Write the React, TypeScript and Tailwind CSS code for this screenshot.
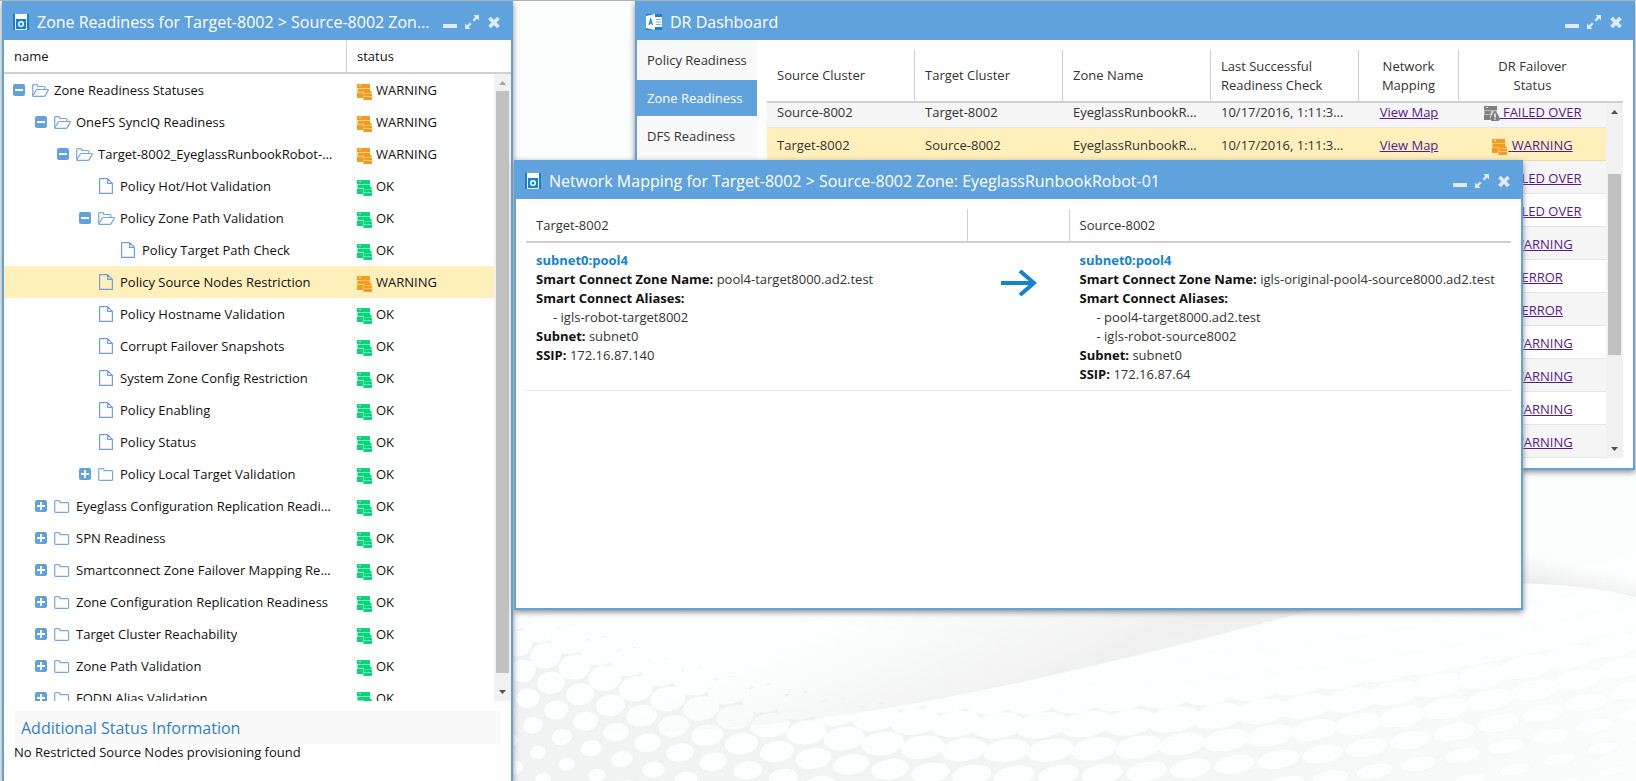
import type { ReactNode } from "react";

type Status = "OK" | "WARNING" | "ERROR" | "FAILED OVER";
type NodeKind = "open" | "closed" | "leaf";

interface TreeNode {
  name: string;
  depth: number;
  kind: NodeKind;
  status: Status;
  selected?: boolean;
}

const TREE: TreeNode[] = [
  { name: "Zone Readiness Statuses", depth: 0, kind: "open", status: "WARNING" },
  { name: "OneFS SyncIQ Readiness", depth: 1, kind: "open", status: "WARNING" },
  { name: "Target-8002_EyeglassRunbookRobot-01_mirror", depth: 2, kind: "open", status: "WARNING" },
  { name: "Policy Hot/Hot Validation", depth: 3, kind: "leaf", status: "OK" },
  { name: "Policy Zone Path Validation", depth: 3, kind: "open", status: "OK" },
  { name: "Policy Target Path Check", depth: 4, kind: "leaf", status: "OK" },
  { name: "Policy Source Nodes Restriction", depth: 3, kind: "leaf", status: "WARNING", selected: true },
  { name: "Policy Hostname Validation", depth: 3, kind: "leaf", status: "OK" },
  { name: "Corrupt Failover Snapshots", depth: 3, kind: "leaf", status: "OK" },
  { name: "System Zone Config Restriction", depth: 3, kind: "leaf", status: "OK" },
  { name: "Policy Enabling", depth: 3, kind: "leaf", status: "OK" },
  { name: "Policy Status", depth: 3, kind: "leaf", status: "OK" },
  { name: "Policy Local Target Validation", depth: 3, kind: "closed", status: "OK" },
  { name: "Eyeglass Configuration Replication Readiness", depth: 1, kind: "closed", status: "OK" },
  { name: "SPN Readiness", depth: 1, kind: "closed", status: "OK" },
  { name: "Smartconnect Zone Failover Mapping Readiness", depth: 1, kind: "closed", status: "OK" },
  { name: "Zone Configuration Replication Readiness", depth: 1, kind: "closed", status: "OK" },
  { name: "Target Cluster Reachability", depth: 1, kind: "closed", status: "OK" },
  { name: "Zone Path Validation", depth: 1, kind: "closed", status: "OK" },
  { name: "FQDN Alias Validation", depth: 1, kind: "closed", status: "OK" },
];

const INDENT = ["pl-[9px]", "pl-[31px]", "pl-[53px]", "pl-[75px]", "pl-[97px]"];

const ZONES: { source: string; target: string; status: Status; selected?: boolean }[] = [
  { source: "Source-8002", target: "Target-8002", status: "FAILED OVER" },
  { source: "Target-8002", target: "Source-8002", status: "WARNING", selected: true },
  { source: "Source-8002", target: "Target-8002", status: "FAILED OVER" },
  { source: "Source-8002", target: "Target-8002", status: "FAILED OVER" },
  { source: "Target-8002", target: "Source-8002", status: "WARNING" },
  { source: "Target-8002", target: "Source-8002", status: "ERROR" },
  { source: "Target-8002", target: "Source-8002", status: "ERROR" },
  { source: "Target-8002", target: "Source-8002", status: "WARNING" },
  { source: "Target-8002", target: "Source-8002", status: "WARNING" },
  { source: "Target-8002", target: "Source-8002", status: "WARNING" },
  { source: "Target-8002", target: "Source-8002", status: "WARNING" },
];

const STATUS_COLOR: Record<Status, string> = {
  OK: "#0ad47b",
  WARNING: "#f39c1f",
  ERROR: "#e03c31",
  "FAILED OVER": "#808080",
};

function StatusIcon({ status }: { status: Status }) {
  const c = STATUS_COLOR[status];
  return (
    <svg viewBox="0 0 16 16" className="inline-block h-4 w-4 shrink-0 align-middle" aria-hidden="true">
      <path fill={c} fillOpacity=".5" d="M0 4h13v1H0zM0 8h13v1H0zM0 5h1v8H0z" />
      <path fill={c} d="M0 0h13v4H0zM1 5h12v3H1zM0 9h13v1H0zM0 10h6v4H0z" />
      <path fill="#fff" fillOpacity=".8" d="M2 1h2v1H2z" />
      {status === "FAILED OVER" ? (
        <>
          <path fill="#f5f5f5" d="M7 5h8v10H6z" fillOpacity=".7" />
          <path
            fill={c}
            d="M11 5q.9 0 1.300.8l3 5.200q1.500 4-1.600 4H8.300q-3.100 0-1.600-4l3-5.200q.4-.8 1.300-.8Z"
          />
          <path fill="#fff" d="M10.300 7.500h1.400v4h-1.400zM10.300 12.500h1.400v1.300h-1.400z" />
        </>
      ) : (
        <>
          <path fill="#fff" fillOpacity=".6" d="M6 7h9v9H6z" />
          <path fill={c} fillOpacity=".6" d="M6 7h9v9H6z" />
          <path fill={c} d="M7 7h7v2H7zM7 10h8v2H7zM7 13h8v3H7z" />
        </>
      )}
    </svg>
  );
}

function FolderOpenIcon() {
  return (
    <svg viewBox="0 0 17 13" className="h-[13px] w-[17px]" fill="none" stroke="#7aa6e2" strokeWidth="1.2" strokeLinejoin="round">
      <path d="M.7 11.500v-10q0-.9.9-.9h3.200q.9 0 .9.900v1h6.300q.9 0 .9.900v2" />
      <path d="M.8 11.800 4.300 6.100q.3-.6 1-.6h10.300q1.100 0 .6.900l-3 5.200q-.4.700-1.200.7H1.300q-.8 0-.5-.5Z" />
    </svg>
  );
}

function FolderIcon() {
  return (
    <svg viewBox="0 0 17 13" className="h-[13px] w-[17px]" fill="none" stroke="#7aa6e2" strokeWidth="1.2" strokeLinejoin="round">
      <path d="M.7 1.600q0-1 1-1h3.300q1 0 1 1v1h7.600q1 0 1 1v7.800q0 1-1 1H1.700q-1 0-1-1Z" />
    </svg>
  );
}

function FileIcon() {
  return (
    <svg viewBox="0 0 16 16" className="h-4 w-4" fill="none" stroke="#6f9fe0" strokeWidth="1.2" strokeLinejoin="round">
      <path d="M1.600.6h8l4.800 4.800v10H1.600ZM9.600.6v4.800h4.800" />
    </svg>
  );
}

function Expander({ open, label }: { open: boolean; label: string }) {
  return (
    <button aria-label={`${open ? "Collapse" : "Expand"} ${label}`} className="h-3 w-3 shrink-0 rounded-xs bg-[#5fa2dd]">
      <svg viewBox="0 0 12 12" className="h-3 w-3" fill="#fff">
        <path d={open ? "M2 5h8v2H2z" : "M2 5h8v2H2zM5 2h2v8H5z"} />
      </svg>
    </button>
  );
}

function ServerLogo() {
  return (
    <svg viewBox="0 0 16 16" className="h-4 w-4 shrink-0" aria-hidden="true">
      <path fill="#1583d3" d="M0 0h16v16H0z" />
      <path fill="#fff" d="M2 0h12v5H2z" />
      <path fill="none" stroke="#fff" d="M2.500 5v10.500h11V5" />
      <circle cx="8" cy="10" r="2.300" fill="none" stroke="#fff" strokeWidth="1.500" />
    </svg>
  );
}

function DashboardLogo() {
  return (
    <svg viewBox="0 0 16 16" className="h-4 w-4 shrink-0" aria-hidden="true">
      <path fill="#1583d3" d="M0 0h16v16H0z" />
      <path fill="#fff" d="M0 2 9 0v16l-9-2zM9 3h7v10H9z" />
      <path stroke="#1583d3" strokeOpacity=".6" d="M10 5.500h5M10 8h5M10 10.500h5" />
      <path fill="none" stroke="#1583d3" strokeWidth="1.200" d="M3 11 4.700 5.200 6.400 11M3.500 9.200h2.400" />
    </svg>
  );
}

function WindowTools() {
  return (
    <div className="flex shrink-0 items-center gap-2 text-white/80">
      <button aria-label="Minimize">
        <svg viewBox="0 0 14 14" className="h-[14px] w-[14px]" fill="currentColor">
          <rect x="0" y="9" width="14" height="4" rx=".5" />
        </svg>
      </button>
      <button aria-label="Maximize">
        <svg viewBox="0 0 14 14" className="h-[14px] w-[14px]" fill="currentColor">
          <path d="M8.500 0H14v5.500l-1.900-1.900-3 3-1.700-1.700 3-3zM0 14V8.500l1.900 1.900 3-3 1.700 1.700-3 3L5.500 14z" />
        </svg>
      </button>
      <button aria-label="Close">
        <svg viewBox="0 0 14 14" className="h-[14px] w-[14px]" stroke="currentColor" strokeWidth="3.600">
          <path d="M2.500 3l9 9M11.500 3l-9 9" />
        </svg>
      </button>
    </div>
  );
}

function DesktopWindow(props: { title: string; logo: ReactNode; className: string; children: ReactNode }) {
  return (
    <section
      className={`absolute flex flex-col border-2 border-t-0 border-[#5fa2dd] bg-white shadow-[0_2px_6px_#888] ${props.className}`}
    >
      <header className="flex h-[39px] shrink-0 items-center gap-2 bg-[#5fa2dd] pl-[9px] pr-[10px] pt-0.5">
        {props.logo}
        <h2 className="min-w-0 flex-1 truncate text-base leading-6 text-white">{props.title}</h2>
        <WindowTools />
      </header>
      {props.children}
    </section>
  );
}

function ScrollBar({ thumb, dimUp }: { thumb: string; dimUp?: boolean }) {
  return (
    <div className="flex w-[17px] shrink-0 flex-col items-center bg-[#f1f1f1]" aria-hidden="true">
      <svg viewBox="0 0 17 17" className="h-[17px] w-[17px] shrink-0" fill={dimUp ? "#a3a3a3" : "#505050"}>
        <path d="M5 11l3.500-4 3.500 4z" />
      </svg>
      <div className="flex min-h-0 w-[13px] flex-1 flex-col">
        <div className={`bg-[#c1c1c1] ${thumb}`} />
      </div>
      <svg viewBox="0 0 17 17" className="h-[17px] w-[17px] shrink-0" fill="#505050">
        <path d="M5 6l3.500 4L12 6z" />
      </svg>
    </div>
  );
}

function ReadinessTree() {
  return (
    <>
      <div className="flex h-[34px] shrink-0 items-stretch border-b-2 border-[#d0d0d0] leading-8">
        <div className="w-[343px] border-r border-[#d0d0d0] pl-[10px]">name</div>
        <div className="pl-[10px]">status</div>
      </div>
      <div className="flex min-h-0 flex-1">
        <div className="min-w-0 flex-1 overflow-hidden">
          <table className="w-full table-fixed">
            <colgroup>
              <col className="w-[343px]" />
              <col />
            </colgroup>
            <tbody>
              {TREE.map((n) => (
                <tr key={n.name} className={n.selected ? "bg-[#ffefbb]" : ""}>
                  <td className="h-8 p-0">
                    <div className={`flex items-center pr-[10px] ${INDENT[n.depth]}`}>
                      {n.kind === "leaf" ? (
                        <span className="w-3 shrink-0" />
                      ) : (
                        <Expander open={n.kind === "open"} label={n.name} />
                      )}
                      <span className="ml-[7px] mr-[5px] flex w-[17px] shrink-0">
                        {n.kind === "open" && <FolderOpenIcon />}
                        {n.kind === "closed" && <FolderIcon />}
                        {n.kind === "leaf" && <FileIcon />}
                      </span>
                      <span className="truncate pt-0.5">{n.name}</span>
                    </div>
                  </td>
                  <td className="p-0 pl-[10px] pt-0.5">
                    <div className="flex items-center gap-[3px]">
                      <span className="flex pt-0.5">
                        <StatusIcon status={n.status} />
                      </span>
                      {n.status}
                    </div>
                  </td>
                </tr>
              ))}
            </tbody>
          </table>
        </div>
        <ScrollBar thumb="h-[582px]" dimUp />
      </div>
      <div className="h-20 shrink-0 px-[10px] pt-[10px]">
        <h3 className="bg-[#f9f9f9] px-[7px] pt-px text-base leading-8 text-[#2f80c8]">Additional Status Information</h3>
        <p className="leading-4">No Restricted Source Nodes provisioning found</p>
      </div>
    </>
  );
}

function Dashboard() {
  const th = "h-[51px] border-r border-[#d0d0d0] px-[10px] py-0 text-left font-normal";
  const td = "truncate px-[10px] pb-0 pt-0.5";
  return (
    <div className="flex min-h-0 flex-1">
      <nav className="flex w-[120px] shrink-0 flex-col gap-0.5 bg-[#f9f9f9] pt-0.5 leading-9">
        <button className="px-[10px] text-left">Policy Readiness</button>
        <button className="bg-[#5fa2dd] px-[10px] text-left font-medium text-white">Zone Readiness</button>
        <button className="px-[10px] text-left">DFS Readiness</button>
      </nav>
      <div className="flex min-w-0 flex-1 flex-col p-[10px]">
        <table className="w-full table-fixed border-separate border-spacing-0 border-b-2 border-[#d0d0d0] leading-[19px]">
          <colgroup>
            <col className="w-[148px]" />
            <col className="w-[148px]" />
            <col className="w-[148px]" />
            <col className="w-[148px]" />
            <col className="w-[100px]" />
            <col />
            <col className="w-[17px]" />
          </colgroup>
          <thead>
            <tr>
              <th className={th}>Source Cluster</th>
              <th className={th}>Target Cluster</th>
              <th className={th}>Zone Name</th>
              <th className={th}>
                Last Successful
                <br />
                Readiness Check
              </th>
              <th className="border-r border-[#d0d0d0] p-0 text-center font-normal">
                Network
                <br />
                Mapping
              </th>
              <th className="p-0 text-center font-normal">
                DR Failover
                <br />
                Status
              </th>
              <th />
            </tr>
          </thead>
        </table>
        <div className="flex min-h-0 flex-1">
          {/* list is scrolled, so the first row is anchored from the bottom and partly hidden */}
          <div className="flex min-w-0 flex-1 flex-col justify-end overflow-hidden">
            <table className="w-full table-fixed border-separate border-spacing-0 leading-[30px]">
              <colgroup>
                <col className="w-[148px]" />
                <col className="w-[148px]" />
                <col className="w-[148px]" />
                <col className="w-[148px]" />
                <col className="w-[100px]" />
                <col />
              </colgroup>
              <tbody>
                {ZONES.map((z, i) => (
                  <tr
                    key={i}
                    className={`h-[33px] [&>td]:border-b ${
                      z.selected
                        ? "bg-[#ffefbb] [&>td]:border-[#ecdcaa]"
                        : i % 2 === 0
                          ? "bg-[#f5f5f5] [&>td]:border-[#e4e4e4]"
                          : "bg-white [&>td]:border-[#e4e4e4]"
                    }`}
                  >
                    <td className={td}>{z.source}</td>
                    <td className={td}>{z.target}</td>
                    <td className={td}>EyeglassRunbookRobot-01</td>
                    <td className={td}>10/17/2016, 1:11:35 PM</td>
                    <td className="px-0 pb-0 pt-0.5 text-center">
                      <a href="#map" className="text-[#551a8b] underline">
                        View Map
                      </a>
                    </td>
                    <td className="px-0 pb-0 pt-0.5 text-center">
                      <a href="#status" className="whitespace-nowrap text-[#551a8b] underline">
                        <StatusIcon status={z.status} /> {z.status}
                      </a>
                    </td>
                  </tr>
                ))}
              </tbody>
            </table>
          </div>
          <ScrollBar thumb="mt-[54px] h-[181px]" />
        </div>
      </div>
    </div>
  );
}

function PoolDetails(props: { zone: string; aliases: string[]; ssip: string }) {
  return (
    <div className="px-[10px] pb-[6px] pt-2 leading-[19px] [&_b]:text-[#111]">
      <div className="font-bold text-[#1583d3]">subnet0:pool4</div>
      <div>
        <b>Smart Connect Zone Name:</b> {props.zone}
      </div>
      <b>Smart Connect Aliases:</b>
      {props.aliases.map((a) => (
        <div key={a} className="pl-[17px]">
          - {a}
        </div>
      ))}
      <div>
        <b>Subnet:</b> subnet0
      </div>
      <div>
        <b>SSIP:</b> {props.ssip}
      </div>
    </div>
  );
}

function NetworkMapping() {
  return (
    <div className="p-[10px]">
      <table className="w-full table-fixed border-separate border-spacing-0">
        <colgroup>
          <col />
          <col className="w-[102px]" />
          <col />
        </colgroup>
        <thead>
          <tr className="h-[34px] [&>th]:border-b-2 [&>th]:border-b-[#d0d0d0]">
            <th className="border-r border-[#d0d0d0] px-[10px] pb-0 pt-0.5 text-left font-normal">Target-8002</th>
            <th className="border-r border-[#d0d0d0] p-0" />
            <th className="px-[10px] pb-0 pt-0.5 text-left font-normal">Source-8002</th>
          </tr>
        </thead>
        <tbody>
          <tr className="align-top [&>td]:border-b [&>td]:border-[#e6e6e6]">
            <td className="p-0">
              <PoolDetails zone="pool4-target8000.ad2.test" aliases={["igls-robot-target8002"]} ssip="172.16.87.140" />
            </td>
            <td className="px-0 pb-0 pt-[27px]">
              <svg
                viewBox="0 0 36 26"
                className="mx-auto h-[26px] w-9"
                fill="none"
                stroke="#1583d3"
                strokeWidth="4"
                aria-label="maps to"
              >
                <path d="M0 13h33M19 1l14 12-14 12" />
              </svg>
            </td>
            <td className="p-0">
              <PoolDetails
                zone="igls-original-pool4-source8000.ad2.test"
                aliases={["pool4-target8000.ad2.test", "igls-robot-source8002"]}
                ssip="172.16.87.64"
              />
            </td>
          </tr>
        </tbody>
      </table>
    </div>
  );
}

// Height of a dot row at x, relative to its crest near x = 1010.
const bend = (x: number) => (x < 1010 ? -0.00044 : -0.00022) * (x - 1010) ** 2;

function wallpaperDots() {
  const dots: { x: number; y: number; rx: number; ry: number; a: number }[] = [];
  for (let row = 0; row < 12; row++) {
    const v = 650 + row * 25;
    let x = 470 + row * 5;
    while (x < 1660) {
      const step = Math.min(44, 28 + (x - 510) * 0.032);
      const y = v + bend(x);
      const ratio = Math.max(0.3, 0.68 - 0.0028 * Math.max(0, v - 715));
      if (y > 560 && y < 800) {
        dots.push({ x, y, rx: step * ratio * 0.92, ry: 22 * ratio - (x - 510) * 0.003, a: x < 1010 ? -8 : -10 });
      }
      x += step;
    }
  }
  return dots;
}

function Wallpaper() {
  return (
    <svg
      viewBox="0 0 1636 781"
      preserveAspectRatio="xMidYMid slice"
      className="absolute inset-0 h-full w-full"
      aria-hidden="true"
    >
      <defs>
        <linearGradient id="haze" gradientUnits="userSpaceOnUse" x1="560" y1="781" x2="1636" y2="700">
          <stop offset="0" stopColor="#f1f3f2" />
          <stop offset=".4" stopColor="#f2f4f3" />
          <stop offset=".75" stopColor="#f7f8f8" />
          <stop offset="1" stopColor="#fafbfb" />
        </linearGradient>
        <linearGradient id="fold" gradientUnits="userSpaceOnUse" x1="850" y1="620" x2="900" y2="740">
          <stop offset="0" stopColor="#efefef" stopOpacity="0" />
          <stop offset="1" stopColor="#ebebeb" stopOpacity=".7" />
        </linearGradient>
        <linearGradient id="hill" gradientUnits="userSpaceOnUse" x1="1590" y1="565" x2="1584" y2="592">
          <stop offset="0" stopColor="#f2f2f2" stopOpacity="0" />
          <stop offset="1" stopColor="#ededed" />
        </linearGradient>
      </defs>
      <path fill="#fcfdfd" d="M0 0h1636v781H0z" />
      <path fill="url(#haze)" d="M505 588Q757 706 1010 706Q1323 706 1636 630V781H505Z" />
      {wallpaperDots().map((d, i) => (
        <ellipse
          key={i}
          cx={d.x}
          cy={d.y}
          rx={d.rx}
          ry={d.ry}
          fill="#fdfefe"
          transform={`rotate(${d.a} ${d.x} ${d.y})`}
        />
      ))}
      <path fill="url(#fold)" d="M505 733Q690 738 860 712T1310 610L1310 560H505Z" />
      <path fill="url(#hill)" d="M1500 550H1636V597Q1580 582 1500 583Z" />
    </svg>
  );
}

export default function App() {
  return (
    <main className="relative h-screen overflow-hidden border-t border-[#b0b0b0] font-['Open_Sans','Noto_Sans',sans-serif] text-[13px] text-[#111]">
      <Wallpaper />
      <DesktopWindow
        title="Zone Readiness for Target-8002 > Source-8002 Zone: EyeglassRunbookRobot-01"
        logo={<ServerLogo />}
        className="bottom-0 left-0.5 top-0 w-[511px] border-b-0"
      >
        <ReadinessTree />
      </DesktopWindow>
      <DesktopWindow
        title="DR Dashboard"
        logo={<DashboardLogo />}
        className="left-[635px] right-px top-0 h-[469px] text-[#333]"
      >
        <Dashboard />
      </DesktopWindow>
      <DesktopWindow
        title="Network Mapping for Target-8002 > Source-8002 Zone: EyeglassRunbookRobot-01"
        logo={<ServerLogo />}
        className="left-[514px] right-[113px] top-[159px] h-[450px] text-[#333]"
      >
        <NetworkMapping />
      </DesktopWindow>
    </main>
  );
}
